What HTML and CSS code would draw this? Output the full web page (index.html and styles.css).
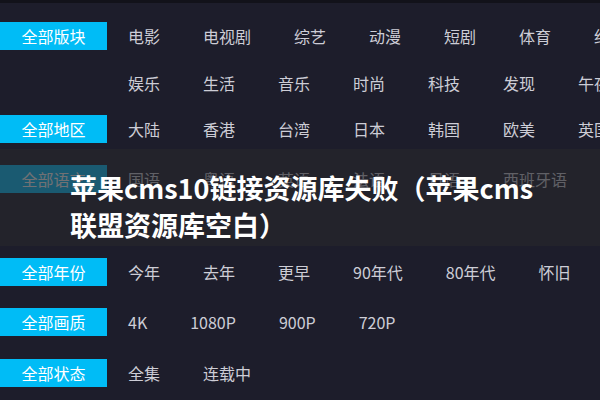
FILE: index.html
```html
<!DOCTYPE html>
<html lang="zh-CN">
<head>
<meta charset="utf-8">
<title>苹果cms10链接资源库失败</title>
<link rel="stylesheet" href="styles.css">
</head>
<body>
<div class="page">
  <div class="topbar"></div>
  <div class="filters">
    <div class="group">
      <div class="line">
        <span class="label">全部版块</span>
        <ul class="items">
          <li>电影</li><li>电视剧</li><li>综艺</li><li>动漫</li><li>短剧</li><li>体育</li><li>纪录</li>
        </ul>
      </div>
      <div class="line">
        <span class="label empty"></span>
        <ul class="items">
          <li>娱乐</li><li>生活</li><li>音乐</li><li>时尚</li><li>科技</li><li>发现</li><li>午夜</li>
        </ul>
      </div>
    </div>
    <div class="group tight">
      <div class="line">
        <span class="label">全部地区</span>
        <ul class="items">
          <li>大陆</li><li>香港</li><li>台湾</li><li>日本</li><li>韩国</li><li>欧美</li><li>英国</li>
        </ul>
      </div>
    </div>
    <div class="group">
      <div class="line">
        <span class="label">全部语言</span>
        <ul class="items">
          <li>国语</li><li>粤语</li><li>英语</li><li>法语</li><li>日语</li><li>西班牙语</li>
        </ul>
      </div>
    </div>
    <div class="group wide">
      <div class="line">
        <span class="label">全部年份</span>
        <ul class="items">
          <li>今年</li><li>去年</li><li>更早</li><li>90年代</li><li>80年代</li><li>怀旧</li>
        </ul>
      </div>
    </div>
    <div class="group">
      <div class="line">
        <span class="label">全部画质</span>
        <ul class="items">
          <li>4K</li><li>1080P</li><li>900P</li><li>720P</li>
        </ul>
      </div>
    </div>
    <div class="group loose">
      <div class="line">
        <span class="label">全部状态</span>
        <ul class="items">
          <li>全集</li><li>连载中</li>
        </ul>
      </div>
    </div>
  </div>
  <div class="overlay">
    <h1 class="title">苹果cms10链接资源库失败（苹果cms<br>联盟资源库空白）</h1>
  </div>
</div>
</body>
</html>
```

FILE: styles.css
```css
html, body {
  margin: 0;
  padding: 0;
}

body {
  width: 600px;
  height: 400px;
  overflow: hidden;
  background: #1d1d2b;
  font-family: "Noto Sans CJK SC", "Noto Sans", sans-serif;
}

.page {
  position: relative;
  width: 600px;
  height: 400px;
  overflow: hidden;
}

.topbar {
  height: 3px;
  background: #12121a;
}

.filters {
  display: flex;
  flex-direction: column;
  padding-top: 19px;
}

.group {
  display: flex;
  flex-direction: column;
  gap: 19px;
  margin-top: 22px;
}

.group:first-child {
  margin-top: 0;
}

.group.tight {
  margin-top: 18px;
}

.group.wide {
  margin-top: 65px;
}

.group.loose {
  margin-top: 23px;
}

.line {
  display: flex;
  align-items: center;
  height: 28px;
}

.label {
  flex: 0 0 107px;
  height: 28px;
  line-height: 28px;
  text-align: center;
  background: #00bcf6;
  color: #ffffff;
  font-size: 16px;
}

.label.empty {
  background: transparent;
}

.items {
  display: flex;
  gap: 43px;
  margin: 0 0 0 21px;
  padding: 0;
  list-style: none;
  white-space: nowrap;
}

.items li {
  font-size: 16px;
  line-height: 28px;
  color: #cdcdd6;
}

.overlay {
  position: absolute;
  left: 0;
  top: 149px;
  width: 600px;
  height: 97px;
  box-sizing: border-box;
  padding: 20px 0 0 70px;
  background: rgba(40, 40, 44, 0.66);
}

.title {
  margin: 0;
  font-size: 27px;
  font-weight: 700;
  line-height: 37px;
  color: #ffffff;
  white-space: nowrap;
}
```
